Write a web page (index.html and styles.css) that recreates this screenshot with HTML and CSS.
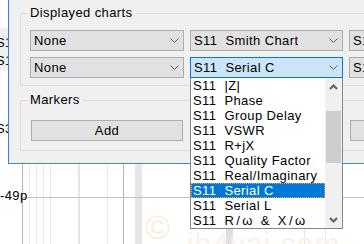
FILE: index.html
```html
<!DOCTYPE html>
<html>
<head>
<meta charset="utf-8">
<title>Display settings</title>
<link rel="stylesheet" href="styles.css">
</head>
<body>
    <div class="app">
        <div class="app_top"></div>
        <div class="trace_rows">
            <div class="trace_row">S11</div>
            <div class="trace_row">S11</div>
        </div>
        <div class="plot">
            <svg class="plot_grid" width="364" height="174" viewBox="0 0 364 174">
                <line x1="22.5" y1="0" x2="22.5" y2="174" stroke="#b9b9b9"/>
                <line x1="29.5" y1="0" x2="29.5" y2="174" stroke="#e9e9e9"/>
                <line x1="36.5" y1="0" x2="36.5" y2="174" stroke="#e9e9e9"/>
                <line x1="43.5" y1="0" x2="43.5" y2="174" stroke="#e9e9e9"/>
                <line x1="50.5" y1="0" x2="50.5" y2="174" stroke="#e9e9e9"/>
                <rect x="78" y="0" width="2" height="174" fill="#e3e3e3"/>
                <line x1="107.5" y1="0" x2="107.5" y2="174" stroke="#e9e9e9"/>
                <line x1="123.5" y1="0" x2="123.5" y2="174" stroke="#b9b9b9"/>
                <rect x="135" y="0" width="7" height="174" fill="#e6e6e6"/>
                <rect x="226" y="0" width="7" height="174" fill="#e0e0e0"/>
                <line x1="304.5" y1="0" x2="304.5" y2="174" stroke="#e3e3e3"/>
                <line x1="325.5" y1="0" x2="325.5" y2="174" stroke="#e9e9e9"/>
                <line x1="22" y1="127.5" x2="364" y2="127.5" stroke="#c4c4c4"/>
                <text class="axis_label" x="-4" y="63">S31</text>
                <text class="axis_label" x="0" y="129.5">-49p</text>
            </svg>
        </div>
    </div>

    <div class="watermark">
        <span class="wm_copy">©</span>
        <span class="wm_text">jh4vaj.com</span>
    </div>

    <div class="dialog">
        <div class="group">
            <div class="group_title">Displayed charts</div>
            <div class="chart_grid">
                <div class="combo"><span>None</span><svg class="chevron" width="9" height="5" viewBox="0 0 9 5"><polyline points="0.5,0.5 4.5,4.5 8.5,0.5" fill="none" stroke="#606060"/></svg></div>
                <div class="combo"><span>S11  Smith Chart</span><svg class="chevron" width="9" height="5" viewBox="0 0 9 5"><polyline points="0.5,0.5 4.5,4.5 8.5,0.5" fill="none" stroke="#606060"/></svg></div>
                <div class="combo"><span>S11  Smith Chart</span><svg class="chevron" width="9" height="5" viewBox="0 0 9 5"><polyline points="0.5,0.5 4.5,4.5 8.5,0.5" fill="none" stroke="#606060"/></svg></div>

                <div class="combo"><span>None</span><svg class="chevron" width="9" height="5" viewBox="0 0 9 5"><polyline points="0.5,0.5 4.5,4.5 8.5,0.5" fill="none" stroke="#606060"/></svg></div>
                <div class="combo_wrap">
                    <div class="combo combo_open"><span>S11  Serial C</span><svg class="chevron" width="9" height="5" viewBox="0 0 9 5"><polyline points="0.5,0.5 4.5,4.5 8.5,0.5" fill="none" stroke="#606060"/></svg></div>
                    <div class="dropdown">
                        <div class="dropdown_items">
                            <div class="item">S11  |Z|</div>
                            <div class="item">S11  Phase</div>
                            <div class="item">S11  Group Delay</div>
                            <div class="item">S11  VSWR</div>
                            <div class="item">S11  R+jX</div>
                            <div class="item">S11  Quality Factor</div>
                            <div class="item">S11  Real/Imaginary</div>
                            <div class="item item_selected">S11  Serial C</div>
                            <div class="item">S11  Serial L</div>
                            <div class="item">S11  <span class="wide">R/ω &amp; X/ω</span></div>
                        </div>
                        <div class="scrollbar">
                            <div class="sb_btn">
                                <svg width="9" height="6" viewBox="0 0 9 6"><polyline points="1,5 4.5,1.5 8,5" fill="none" stroke="#606060" stroke-width="2"/></svg>
                            </div>
                            <div class="sb_track"><div class="sb_thumb"></div></div>
                            <div class="sb_btn">
                                <svg width="9" height="6" viewBox="0 0 9 6"><polyline points="1,1 4.5,4.5 8,1" fill="none" stroke="#606060" stroke-width="2"/></svg>
                            </div>
                        </div>
                    </div>
                </div>
                <div class="combo"><span>S11  Smith Chart</span><svg class="chevron" width="9" height="5" viewBox="0 0 9 5"><polyline points="0.5,0.5 4.5,4.5 8.5,0.5" fill="none" stroke="#606060"/></svg></div>
            </div>
        </div>

        <div class="group markers">
            <div class="group_title">Markers</div>
            <div class="button_row">
                <div class="btn">Add</div>
                <div class="btn">Delete</div>
                <div class="btn">Clear All</div>
            </div>
        </div>
    </div>
</body>
</html>
```

FILE: styles.css
```css
html, body {
    width: 364px;
    height: 244px;
    overflow: hidden;
}

body {
    margin: 0;
    padding: 0;
    position: relative;
    background-color: #fff;
    font-family: "Liberation Sans", Arial, sans-serif;
    font-size: 13px;
    letter-spacing: 0.4px;
    color: #000;
}

/* main window behind the dialog */
.app {
    display: flex;
    flex-direction: column;
    height: 244px;
}

.app_top {
    height: 28px;
    background-color: #fff;
}

.trace_rows {
    height: 42px;
    padding-top: 6px;
    box-sizing: border-box;
    background-color: #f0f0f0;
}

.trace_row {
    height: 18px;
    line-height: 18px;
    margin-left: -4px;
}

.plot {
    flex: 1;
}

.plot_grid {
    display: block;
}

.axis_label {
    font-family: "Liberation Sans", Arial, sans-serif;
    font-size: 13px;
    fill: #000;
}

.watermark {
    position: absolute;
    left: 145px;
    top: 210px;
    display: flex;
    align-items: flex-start;
    font-family: "Liberation Sans", Arial, sans-serif;
    letter-spacing: 1px;
}

.wm_copy {
    font-size: 34px;
    line-height: 34px;
    color: #fcebdc;
}

.wm_text {
    font-size: 30px;
    line-height: 30px;
    margin-top: 19px;
    margin-left: 16px;
    color: #fdf1e6;
}

/* settings dialog */
.dialog {
    position: absolute;
    left: 8px;
    top: -10px;
    width: 540px;
    padding: 22px 0 12px 11px;
    box-sizing: border-box;
    border: 1px solid #3d86d6;
    background-color: #f0f0f0;
}

.group {
    border: 1px solid #dcdcdc;
    padding: 0 0 7px 9px;
}

.group_title {
    width: fit-content;
    height: 16px;
    line-height: 16px;
    margin: -9px 0 0 -2px;
    padding: 0 3px 0 2px;
    background-color: #f0f0f0;
}

.chart_grid {
    display: grid;
    grid-template-columns: 154px 153px 154px;
    column-gap: 6px;
    row-gap: 6px;
    margin-top: 9px;
}

.combo {
    display: flex;
    align-items: center;
    justify-content: space-between;
    height: 21px;
    box-sizing: border-box;
    padding: 1px 4px 0 3px;
    border: 1px solid #adadad;
    background-color: #e1e1e1;
    line-height: 18px;
    white-space: pre;
}

.combo span {
    overflow: hidden;
}

.chevron {
    flex: none;
    margin-top: -1px;
}

.combo_wrap {
    position: relative;
}

.combo_open {
    background-color: #cce4f7;
    border-color: #0078d7;
}

.dropdown {
    position: absolute;
    top: 100%;
    left: 0;
    width: 100%;
    height: 151px;
    box-sizing: border-box;
    display: flex;
    border: 1px solid #828790;
    border-top: none;
    background-color: #fff;
    z-index: 2;
}

.dropdown_items {
    flex: 1;
}

.item {
    height: 15px;
    line-height: 15px;
    padding-left: 2px;
    white-space: pre;
}

.item_selected {
    background-color: #0078d7;
    color: #fff;
    outline: 1px dotted #f5a04c;
    outline-offset: -1px;
}

.wide {
    letter-spacing: 2.4px;
}

.scrollbar {
    width: 17px;
    display: flex;
    flex-direction: column;
    background-color: #f0f0f0;
}

.sb_btn {
    height: 17px;
    display: flex;
    align-items: center;
    justify-content: center;
}

.sb_track {
    flex: 1;
    padding: 16px 1px 0 1px;
}

.sb_thumb {
    height: 52px;
    background-color: #cdcdcd;
}

.markers {
    margin-top: 14px;
    padding-bottom: 9px;
}

.button_row {
    display: grid;
    grid-template-columns: 154px 153px 154px;
    column-gap: 6px;
    margin-top: 12px;
}

.btn {
    width: 152px;
    height: 21px;
    margin-left: 1px;
    box-sizing: border-box;
    border: 1px solid #adadad;
    background-color: #e1e1e1;
    text-align: center;
    line-height: 19px;
}
```
